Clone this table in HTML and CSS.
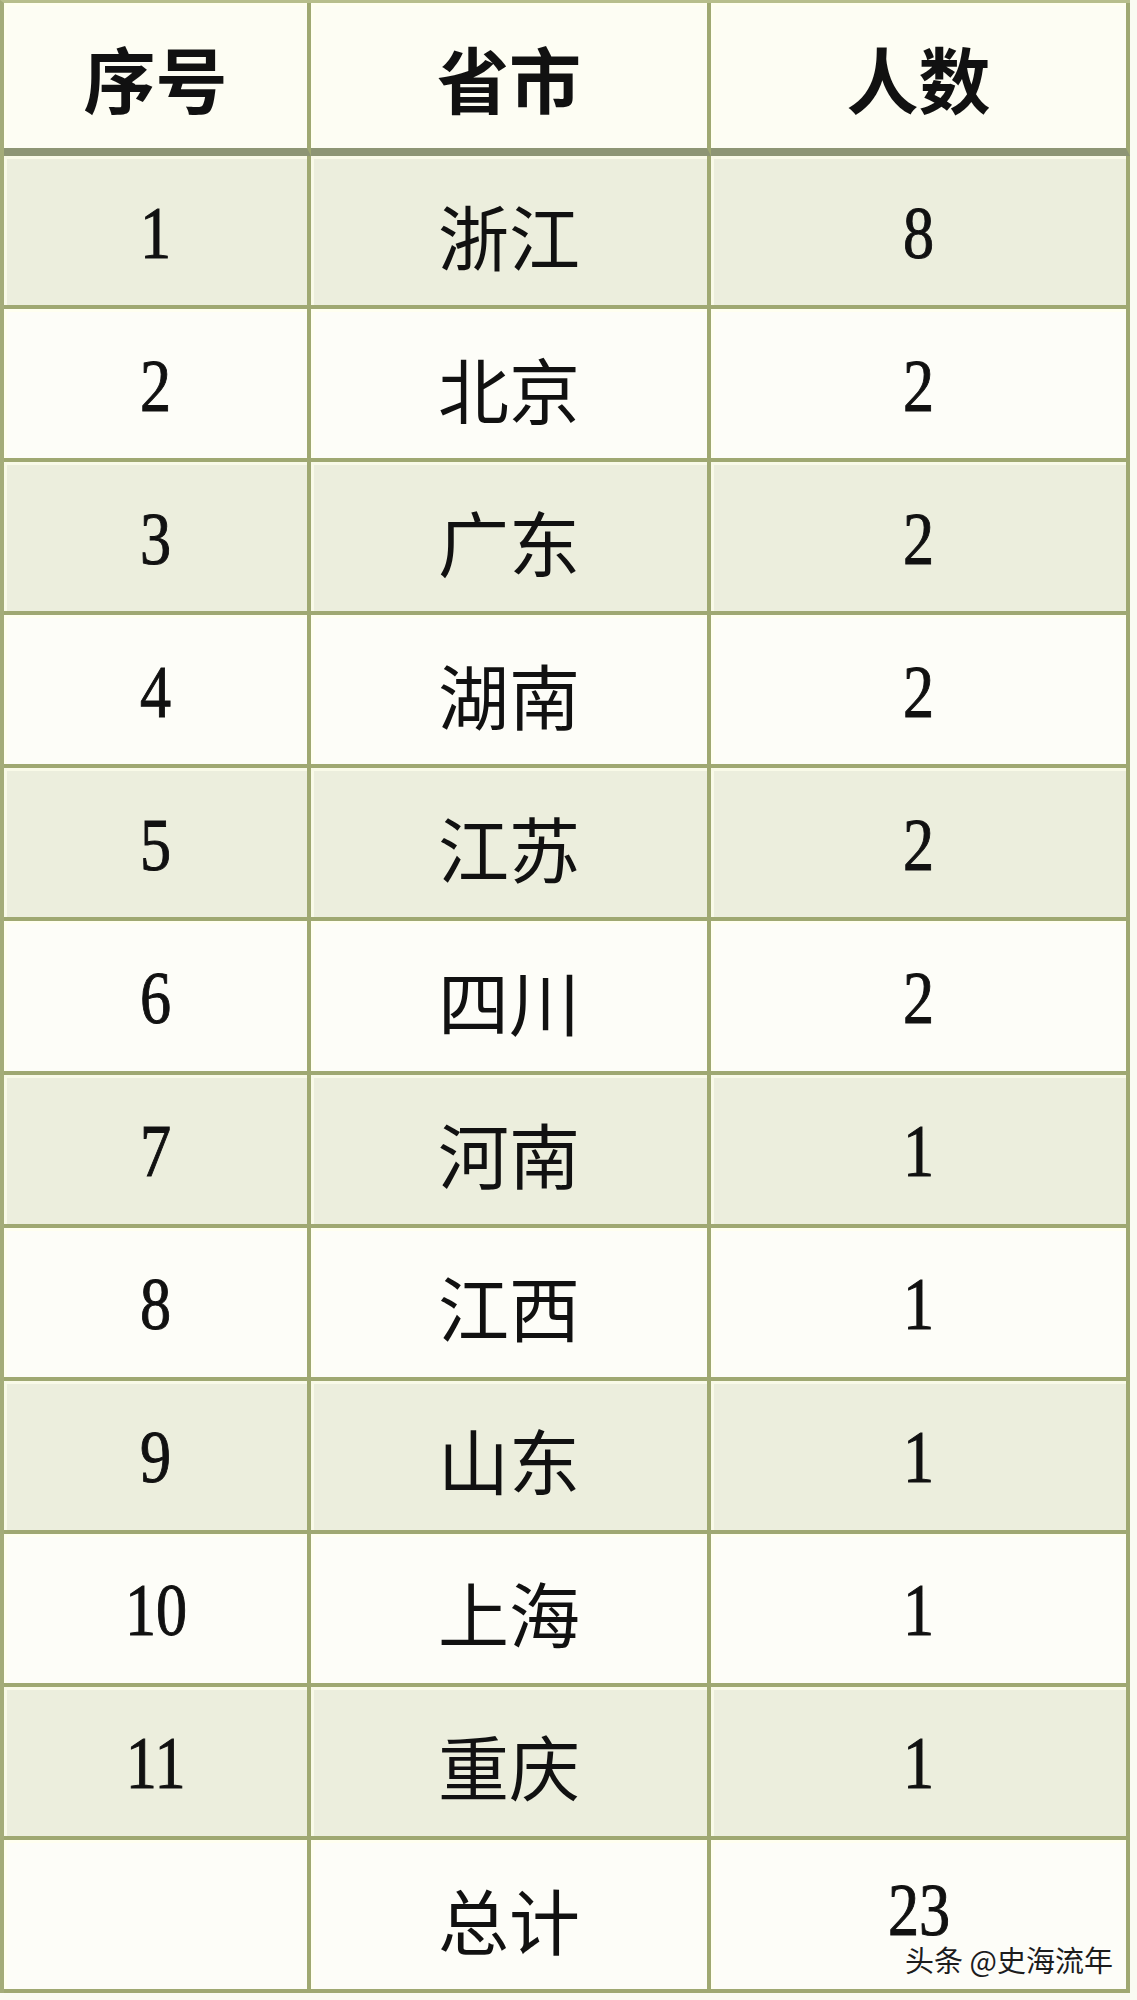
FILE: index.html
```html
<!DOCTYPE html>
<html lang="zh-CN">
<head>
<meta charset="utf-8">
<title>各省市人数统计</title>
<link rel="stylesheet" href="styles.css">
</head>
<body>
<div class="page">
  <div class="stats" role="table">
    <div class="cell head">序号</div>
    <div class="cell head">省市</div>
    <div class="cell head">人数</div>

    <div class="cell num odd"><span>1</span></div><div class="cell cjk odd">浙江</div><div class="cell num odd"><span>8</span></div>
    <div class="cell num even"><span>2</span></div><div class="cell cjk even">北京</div><div class="cell num even"><span>2</span></div>
    <div class="cell num odd"><span>3</span></div><div class="cell cjk odd">广东</div><div class="cell num odd"><span>2</span></div>
    <div class="cell num even"><span>4</span></div><div class="cell cjk even">湖南</div><div class="cell num even"><span>2</span></div>
    <div class="cell num odd"><span>5</span></div><div class="cell cjk odd">江苏</div><div class="cell num odd"><span>2</span></div>
    <div class="cell num even"><span>6</span></div><div class="cell cjk even">四川</div><div class="cell num even"><span>2</span></div>
    <div class="cell num odd"><span>7</span></div><div class="cell cjk odd">河南</div><div class="cell num odd"><span>1</span></div>
    <div class="cell num even"><span>8</span></div><div class="cell cjk even">江西</div><div class="cell num even"><span>1</span></div>
    <div class="cell num odd"><span>9</span></div><div class="cell cjk odd">山东</div><div class="cell num odd"><span>1</span></div>
    <div class="cell num even"><span>10</span></div><div class="cell cjk even">上海</div><div class="cell num even"><span>1</span></div>
    <div class="cell num odd"><span>11</span></div><div class="cell cjk odd">重庆</div><div class="cell num odd"><span>1</span></div>
    <div class="cell num total"></div><div class="cell cjk total">总计</div><div class="cell num total"><span class="sum">23</span></div>
  </div>
  <div class="watermark">头条 @史海流年</div>
</div>
</body>
</html>
```

FILE: styles.css
```css
html, body {
  margin: 0;
  padding: 0;
  background: #fafbf2;
}

.page {
  position: relative;
  width: 1137px;
  height: 2000px;
  overflow: hidden;
}

.stats {
  display: grid;
  grid-template-columns: 307px 400px 419px;
  grid-template-rows: 153px repeat(12, 153.1px);
  width: max-content;
  border-left: 4px solid #a4ac79;
  border-top: 3px solid #b7be8c;
}

.cell {
  box-sizing: border-box;
  display: flex;
  align-items: center;
  justify-content: center;
  border-right: 4px solid #9fa872;
  border-bottom: 4px solid #9fa872;
  color: #111;
  box-shadow: inset 3px 3px 0 rgba(255, 255, 236, 0.7);
}

.head {
  background: #fdfdf3;
  border-bottom: 8px solid #8d9574;
  font-family: "Noto Sans CJK SC", sans-serif;
  font-weight: 700;
  font-size: 72px;
  padding-top: 2px;
}

.odd {
  background: #eceedd;
}

.even, .total {
  background: #fdfdf8;
}

.num {
  font-family: "Liberation Serif", "Noto Sans CJK SC", serif;
  font-size: 74px;
  padding-top: 4px;
}

.num span {
  display: inline-block;
  line-height: 1;
  transform: scaleX(0.84);
  -webkit-text-stroke: 1px #111;
}

.num .sum {
  margin-bottom: 14px;
}

.cjk {
  font-family: "Noto Sans CJK SC", sans-serif;
  font-size: 71px;
  font-weight: 400;
  padding-top: 6px;
}

.watermark {
  position: absolute;
  right: 24px;
  top: 1944px;
  font-family: "Noto Sans CJK SC", sans-serif;
  font-size: 29px;
  line-height: 1.1;
  color: #1c1c1c;
  text-shadow: 0 0 2px #fff, 0 0 2px #fff;
  white-space: nowrap;
}
```
